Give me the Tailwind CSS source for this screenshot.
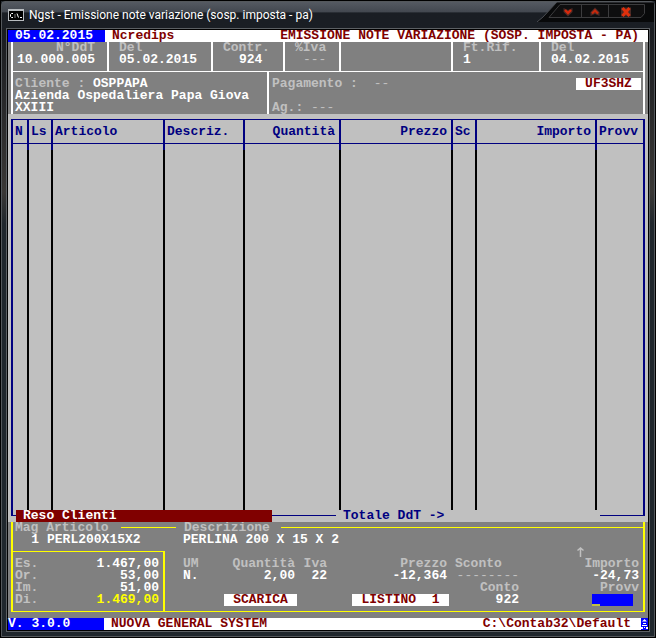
<!DOCTYPE html>
<html lang="it">
<head>
  <meta charset="UTF-8">
  <meta name="viewport" content="width=device-width, initial-scale=1.0">
  <title>Ngst - Emissione note variazione</title>
  <script src="https://cdn.jsdelivr.net/npm/@tailwindcss/browser@4"></script>
</head>
<body class="bg-black">
  <div class="min-h-screen flex flex-col border border-black bg-[#22282e]">
    <div class="flex-1 flex flex-col border border-[#54585c] rounded-t-sm bg-linear-to-b from-[#15181d] via-[#3a3836] via-30% to-[#20272d] to-35%">

      <!-- barra del titolo -->
      <header class="relative h-[26px] flex items-start justify-between bg-linear-to-b from-[#555a62] from-0% via-[#434850] via-38% to-[#1a1e24] to-42%">
        <div class="flex items-center gap-[5px] pl-[6px] pt-[5px]">
          <svg class="w-4 h-4" viewBox="0 0 16 16" aria-hidden="true">
            <rect x="0" y="2" width="16" height="12" fill="#b8bcc0"/>
            <rect x="1" y="4" width="14" height="9" fill="#000"/>
            <path d="M5 6.500H3.500L2.500 7.500V9.500L3.500 10.500H5M7 7.500V8.500M7 9.500V10.500M9 6.500L10.500 10.500M12 10.500H14" fill="none" stroke="#fff"/>
          </svg>
          <h1 class="font-[Roboto,'Noto_Sans',sans-serif] text-xs leading-4 text-white whitespace-nowrap">Ngst - Emissione note variazione (sosp. imposta - pa)</h1>
        </div>
        <div class="relative w-[117px] h-5 flex pl-[13px]">
          <svg class="absolute inset-0 w-full h-full" viewBox="0 0 117 20" aria-hidden="true">
            <path d="M0 20L6 15L20 0H117V20Z" fill="#08090a"/>
            <path d="M0 20L6 15L20 0H117" fill="none" stroke="#4a4d52"/>
            <path d="M12 15.500L23 2.500H107.500V11.500L104 15.500Z" fill="#0e0e0f" stroke="#3c3c3e"/>
            <path d="M44.500 2V16M71.500 2V16" stroke="#3c3c3e"/>
          </svg>
          <button type="button" aria-label="Riduci a icona" class="relative w-8 h-[19px] flex items-center justify-center pl-[4px]">
            <svg class="w-2.5 h-2.5" viewBox="0 0 10 10"><path d="M0.500 1L5 3L9.500 1V5L5 9.500L0.500 5Z" fill="#4a2a26"/><path d="M2 3L5 6L8 3" fill="none" stroke="#d8290c" stroke-width="2.400"/></svg>
          </button>
          <button type="button" aria-label="Ingrandisci" class="relative w-[26px] h-[19px] flex items-center justify-center">
            <svg class="w-2.5 h-2.5" viewBox="0 0 10 10"><path d="M0.500 9V5L5 0.500L9.500 5V9L5 7Z" fill="#4a2a26"/><path d="M2 6.500L5 3.500L8 6.500" fill="none" stroke="#c8290c" stroke-width="2.200"/></svg>
          </button>
          <button type="button" aria-label="Chiudi" class="relative w-9 h-[19px] flex items-center justify-center">
            <svg class="w-2.5 h-2.5" viewBox="0 0 10 10"><path d="M0 0.500H10V9.500H0Z" fill="#4a2a26"/><path d="M1.500 1L8.500 9M8.500 1L1.500 9" stroke="#e0300c" stroke-width="3"/></svg>
          </button>
        </div>
      </header>

      <main class="flex-1 flex flex-col mx-1 mb-1 border border-[#5c6064] bg-[#c0c0c0] font-['Liberation_Mono','DejaVu_Sans_Mono',monospace] font-bold text-[13px] leading-3 text-white whitespace-nowrap">
        <div class="flex-1 flex flex-col border border-black">

          <div class="flex h-3 bg-white text-[#800000]">
            <div class="w-[97px] pl-[7px] bg-[#0000ff] text-white">05.02.2015</div>
            <div class="pl-[7px]">Ncredips</div>
            <div class="flex-1 pr-[9px] text-right">EMISSIONE NOTE VARIAZIONE (SOSP. IMPOSTA - PA)</div>
          </div>

          <!-- testata documento -->
          <section class="bg-[#808080] px-[3px]">
            <dl class="grid grid-cols-[96fr_104fr_72fr_56fr_112fr_88fr_104fr] border-b border-r-2 border-white [&>div]:border-l-2 [&>div]:border-white [&>div]:h-[29px] [&_dt]:text-[#c0c0c0] [&_dt]:h-3 [&_dd]:h-3">
              <div class="pl-[2px] pr-[12px] text-right"><dt>N°DdT</dt><dd>10.000.005</dd></div>
              <div class="pl-[10px]"><dt>Del</dt><dd>05.02.2015</dd></div>
              <div class="pl-[10px]"><dt>Contr.</dt><dd class="pl-4">924</dd></div>
              <div class="pl-[10px]"><dt>%Iva</dt><dd class="pl-2 font-normal text-[#c0c0c0]">---</dd></div>
              <div></div>
              <div class="pl-[10px]"><dt>Ft.Rif.</dt><dd>1</dd></div>
              <div class="pl-[10px]"><dt>Del</dt><dd>04.02.2015</dd></div>
            </dl>
            <div class="grid grid-cols-[256fr_376fr] border-r-2 border-white [&>div]:border-l-2 [&>div]:border-white [&>div]:pt-[6px]">
              <div class="pl-[2px]">
                <p><span class="text-[#c0c0c0]">Cliente :</span> OSPPAPA</p>
                <p>Azienda Ospedaliera Papa Giova</p>
                <p>XXIII</p>
              </div>
              <div class="pl-[3px] pr-[2px] flex justify-between text-[#c0c0c0]">
                <div class="flex flex-col justify-between">
                  <p>Pagamento : <span class="pl-2 font-normal">--</span></p>
                  <p>Ag.: <span class="font-normal">---</span></p>
                </div>
                <button type="button" class="w-[65px] h-3 bg-white text-[#800000] text-center">UF3SHZ</button>
              </div>
            </div>
          </section>

          <!-- righe documento -->
          <section class="px-[3px] pt-[5px]">
            <table class="w-full table-fixed border-separate border-spacing-0 border-t border-x-2 border-[#000080] text-[#000080]">
              <colgroup>
                <col class="w-[14px]"><col class="w-[24px]"><col class="w-[112px]"><col class="w-[80px]"><col class="w-[96px]">
                <col class="w-[112px]"><col class="w-[24px]"><col class="w-[120px]"><col class="w-[48px]">
              </colgroup>
              <thead>
                <tr class="text-left [&>th]:p-0 [&>th]:pt-[6px] [&>th]:pb-[5px] [&>th]:pl-[2px] [&>th]:border-b [&>th+th]:border-l-2 [&>th]:border-[#000080]">
                  <th>N</th>
                  <th>Ls</th>
                  <th>Articolo</th>
                  <th>Descriz.</th>
                  <th><div class="text-right pr-1">Quantità</div></th>
                  <th><div class="text-right pr-1">Prezzo</div></th>
                  <th>Sc</th>
                  <th><div class="text-right pr-1">Importo</div></th>
                  <th>Provv</th>
                </tr>
                <tr class="h-[6px] [&>td]:p-0 [&>td+td]:border-l-2 [&>td]:border-[#000080]">
                  <td></td><td></td><td></td><td></td><td></td><td></td><td></td><td></td><td></td>
                </tr>
              </thead>
              <tbody id="righe" class="[&_td]:p-0 [&_td]:h-3 [&_td+td]:border-l-2 [&_td]:border-black"></tbody>
            </table>
            <div class="flex h-3 text-[#000080]">
              <div class="w-[5px] h-[6px] border-l-2 border-b border-[#000080]"></div>
              <div class="w-64 pl-[7px] bg-[#800000] text-white">Reso Clienti</div>
              <div class="w-16 h-[6px] border-b border-[#000080]"></div>
              <div class="flex-1 pl-[7px]">Totale DdT -&gt;</div>
              <div class="w-[45px] h-[6px] border-b border-r-2 border-[#000080]"></div>
            </div>
          </section>

          <!-- riga corrente -->
          <section class="flex-1 bg-[#808080] px-[3px] pt-[5px]">
            <div class="border-x-2 border-b border-[#ffff00]">
              <div class="flex h-3 -mt-[5px] pl-[2px] text-[#c0c0c0]">
                <div class="w-24">Mag Articolo</div>
                <div class="w-[55px] h-px mt-[5px] ml-[10px] bg-[#ffff00]"></div>
                <div class="w-[88px] ml-[8px]">Descrizione</div>
                <div class="flex-1 h-px mt-[5px] ml-[9px] bg-[#ffff00]"></div>
              </div>
              <div class="flex h-3 pl-[2px]">
                <div class="w-6 text-right">1</div>
                <div class="w-[136px] ml-2">PERL200X15X2</div>
                <div>PERLINA 200 X 15 X 2</div>
              </div>
              <div class="flex">
                <dl class="w-[152px] mt-[5px] pt-[6px] pb-[5px] pl-[2px] pr-1 border-t border-r-2 border-[#ffff00] [&>div]:flex [&>div]:justify-between [&>div]:h-3 [&_dt]:text-[#c0c0c0]">
                  <div><dt>Es.</dt><dd>1.467,00</dd></div>
                  <div><dt>Or.</dt><dd>53,00</dd></div>
                  <div><dt>Im.</dt><dd>51,00</dd></div>
                  <div class="text-[#ffff00]"><dt>Di.</dt><dd>1.469,00</dd></div>
                </dl>
                <div class="flex-1 mr-1 grid grid-cols-[50px_80px_32px_120fr_72px_120fr] auto-rows-[12px] content-start text-right">
                  <div class="col-span-6 flex justify-end pr-[55px] pt-[1px]">
                    <svg class="w-[7px] h-[10px]" viewBox="0 0 7 10" aria-hidden="true"><path d="M3.500 0.500V10M0.500 3.500L3.500 1L6.500 3.500" fill="none" stroke="#c0c0c0" stroke-width="1.500"/></svg>
                  </div>
                  <div class="text-left pl-[18px] text-[#c0c0c0]">UM</div>
                  <div class="text-[#c0c0c0]">Quantità</div>
                  <div class="text-[#c0c0c0]">Iva</div>
                  <div class="text-[#c0c0c0]">Prezzo</div>
                  <div class="text-left pl-2 text-[#c0c0c0]">Sconto</div>
                  <div class="text-[#c0c0c0]">Importo</div>

                  <div class="text-left pl-[18px]">N.</div>
                  <div>2,00</div>
                  <div>22</div>
                  <div>-12,364</div>
                  <div class="font-normal text-[#c0c0c0]">--------</div>
                  <div>-24,73</div>

                  <div class="col-start-5 text-[#c0c0c0]">Conto</div>
                  <label for="provv" class="text-[#c0c0c0]">Provv</label>

                  <button type="button" class="col-start-2 col-span-2 justify-self-start ml-[9px] w-[73px] h-3 bg-white text-[#800000] text-center">SCARICA</button>
                  <button type="button" class="justify-self-end -mr-[2px] w-[97px] h-3 bg-white text-[#800000] text-center">LISTINO&nbsp; 1</button>
                  <div>922</div>
                  <div class="relative justify-self-end mr-[6px] w-[41px] h-3">
                    <input id="provv" type="text" class="block w-full h-3 bg-[#0000ff] text-white outline-none">
                    <span class="absolute left-0 bottom-0 w-2 h-[2px] bg-[#c0c040]"></span>
                  </div>
                </div>
              </div>
            </div>
          </section>

          <footer class="flex h-3 bg-white text-[#800000]">
            <div class="w-24 bg-[#0000ff] text-white">V. 3.0.0</div>
            <div class="flex-1 pl-[7px]">NUOVA GENERAL SYSTEM</div>
            <div class="pr-[10px]">C:\Contab32\Default</div>
            <svg class="w-[7px] h-3 bg-[#0000ff]" viewBox="0 0 7 12" aria-hidden="true"><path d="M3.500 1L6 3.500H1ZM2 5H5V6H2ZM1 7H6V8H1ZM0 9H2V11H0ZM3 9H4V10H3ZM5 9H7V11H5Z" fill="#fff"/></svg>
          </footer>
        </div>
      </main>
    </div>
  </div>

  <script>
    // righe vuote della griglia
    const righe = document.getElementById('righe');
    for (let i = 0; i < 30; i++) {
      const tr = document.createElement('tr');
      tr.innerHTML = '<td></td>'.repeat(9);
      righe.appendChild(tr);
    }
  </script>
</body>
</html>
